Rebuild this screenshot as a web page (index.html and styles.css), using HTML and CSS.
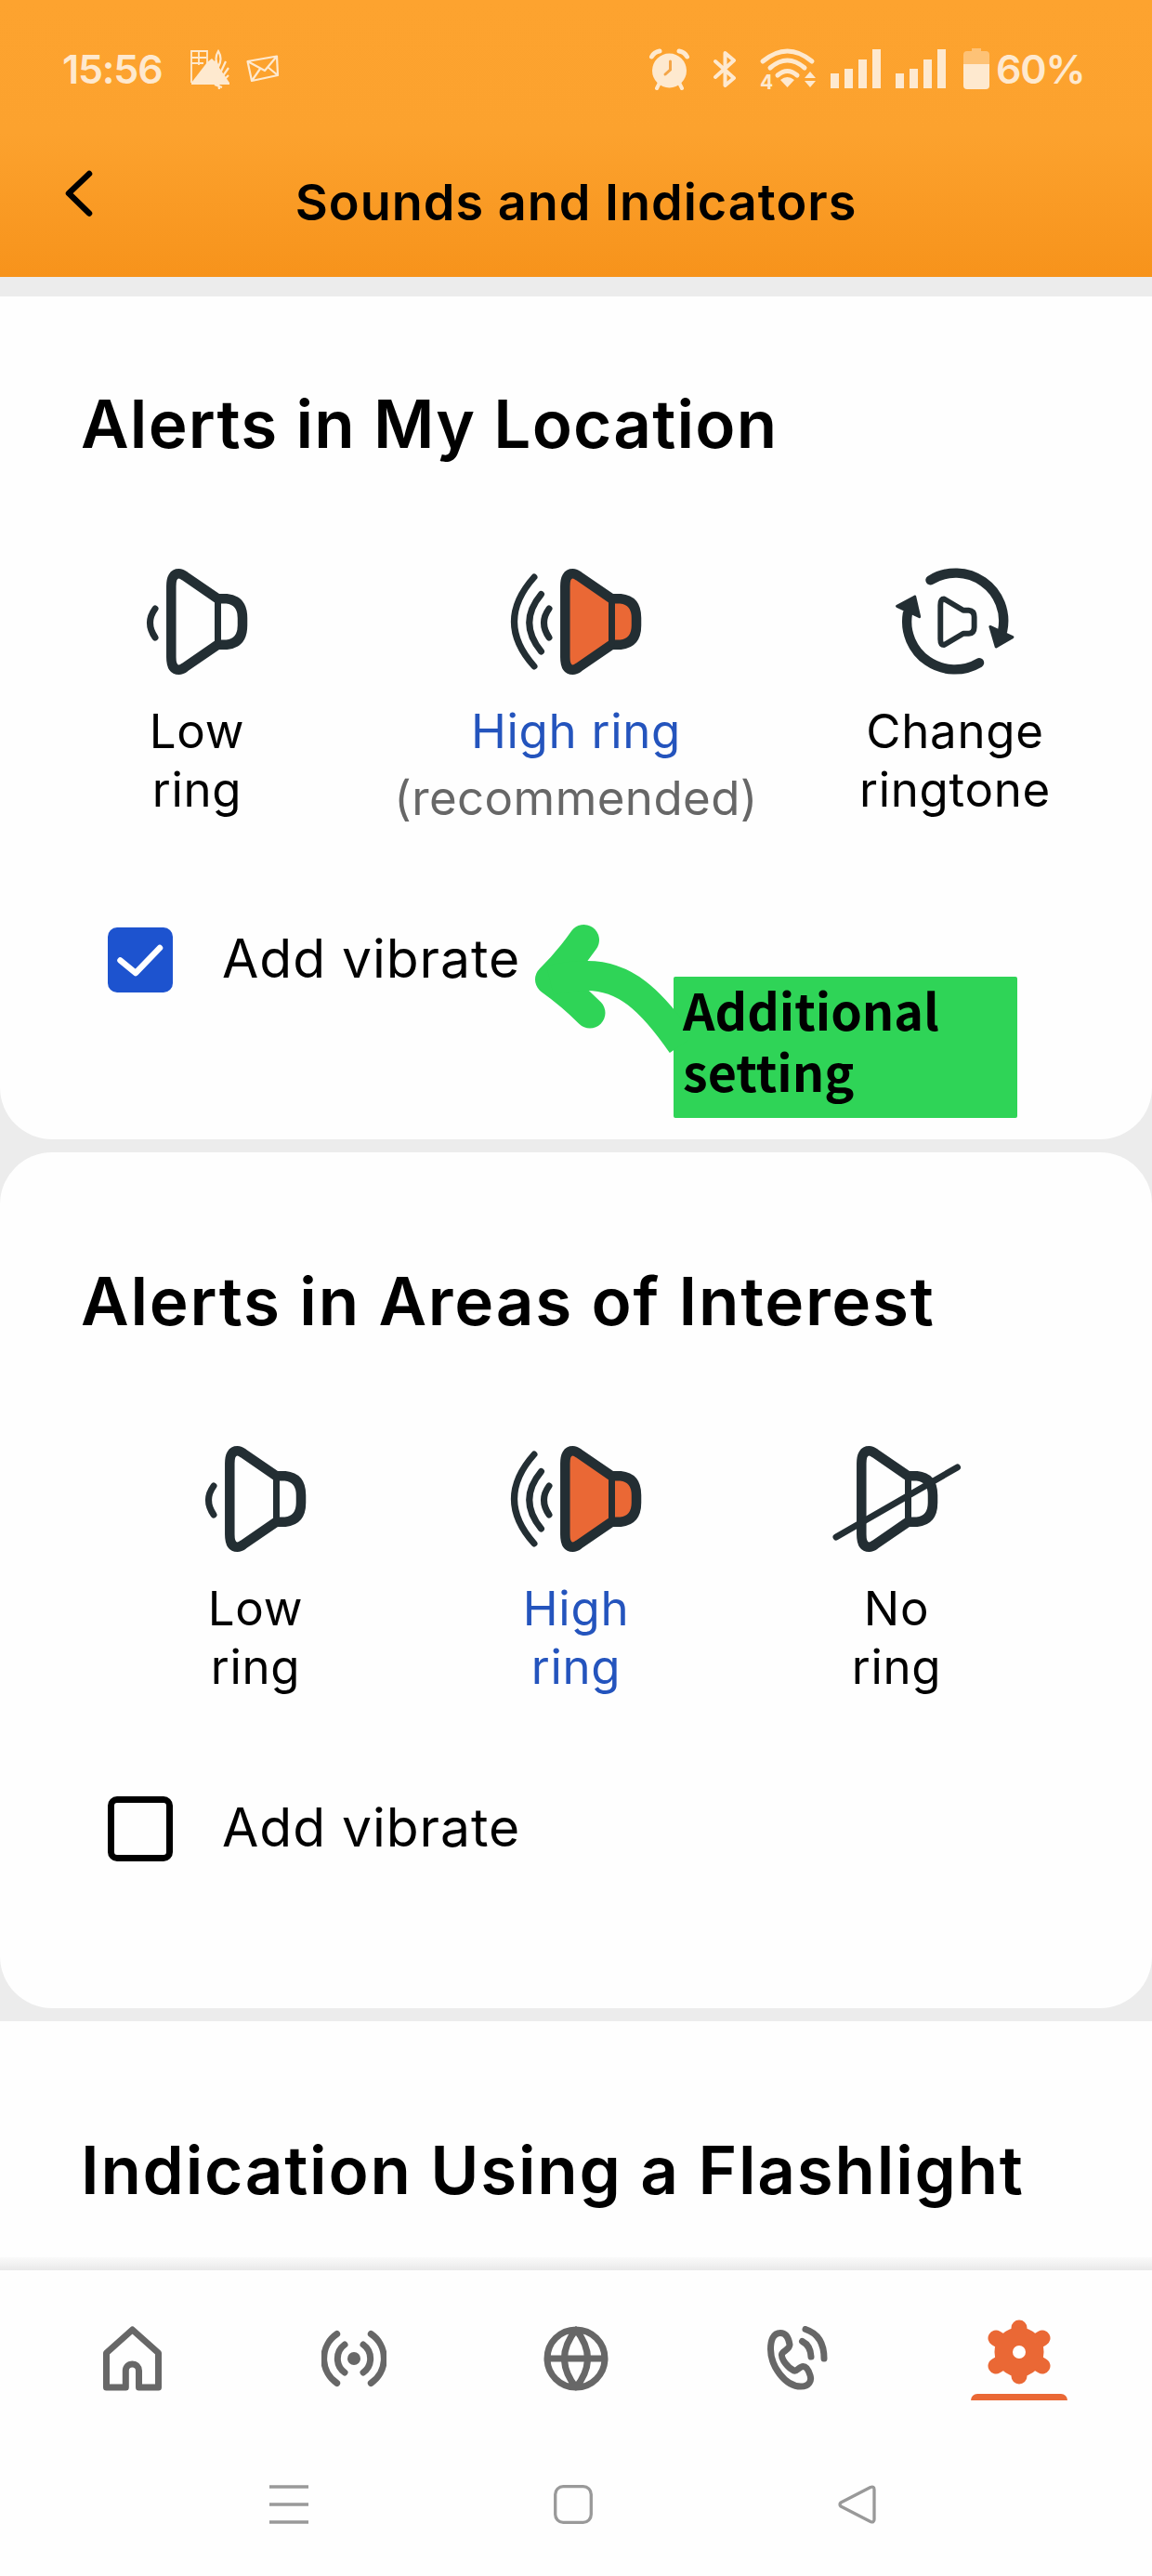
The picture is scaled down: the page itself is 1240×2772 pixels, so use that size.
FILE: index.html
```html
<!DOCTYPE html>
<html lang="en">
<head>
<meta charset="utf-8">
<title>Sounds and Indicators</title>
<link rel="stylesheet" href="styles.css">
</head>
<body>
<svg class="sprite" aria-hidden="true">
  <symbol id="cone" viewBox="0 0 88 114" overflow="visible">
    <path class="cone-body" d="M5.3 19Q5.3 5.3 13.5 5.3Q16.5 5.3 20 8L55.5 32.3H65Q82 34 82 53V61Q82 80 65 81.7H55.5L20 106Q16.5 108.700 13.500 108.700Q5.300 108.700 5.300 95Z"/>
    <path class="thin" d="M55.500 34V80"/>
  </symbol>
</svg>
<div class="screen">
  <header class="header">
    <div class="status">
      <span class="time">15:56</span>
      <svg class="s-photo" width="42" height="43" viewBox="0 0 42 43"><path fill="none" stroke="currentColor" stroke-width="1.800" d="M1 36V2H18V16M1 9H17M1 15H14M9 2V17"/><path fill="currentColor" d="M1 36L18 14L23 10L27 14L42 36V38H1Z"/><path fill="none" stroke="currentColor" stroke-width="2.200" d="M30 2Q25 10 30 19Q35 10 30 2ZM27 12L31 43M38 13L31 28M41 20L32 33M41 28L32 37M26 38L34 41"/></svg>
      <svg class="s-mail" width="36" height="30" viewBox="0 0 36 30"><path fill="none" stroke="currentColor" stroke-width="2.200" stroke-linejoin="round" d="M1.500 7L33 1.500L34 22L6 28ZM1.500 7L20 17L33 1.500M6 28L15 15M34 22L23 13"/></svg>
      <span class="spacer"></span>
      <svg class="s-alarm" width="45" height="45" viewBox="0 0 45 45"><circle cx="22.500" cy="24" r="18.500" fill="currentColor"/><path fill="none" stroke="currentColor" stroke-width="5" stroke-linecap="round" d="M3.500 9Q6 4 12 3M41.500 9Q39 4 33 3"/><path fill="none" stroke="currentColor" stroke-width="4" stroke-linecap="round" d="M12 37L9 43M33 37L36 43"/><path fill="none" stroke="#f4a547" stroke-width="3" stroke-linecap="round" d="M23.500 14V23L18 28"/></svg>
      <svg class="s-bt" width="25" height="43" viewBox="0 0 25 43"><path fill="none" stroke="currentColor" stroke-width="4" stroke-linejoin="round" stroke-linecap="round" d="M2 13L22 31L12.500 39V4L22 12L2 30"/></svg>
      <svg class="s-wifi" width="62" height="45" viewBox="0 0 62 45"><path fill="none" stroke="currentColor" stroke-width="5" stroke-linecap="round" d="M3 14Q29.500 -8 56 14M11 21Q29.500 5 48 21M19 29Q29.500 20 40 29"/><path fill="currentColor" d="M22 34Q29.500 28 37 34L29.500 42ZM48 32L54 25L60 32ZM48 35H60L54 42Z"/><text x="0" y="44" class="wifi-gen">4</text></svg>
      <svg class="s-sig" width="54" height="43" viewBox="0 0 54 43"><path fill="currentColor" d="M0 26h9v16h-9zM15 21h9v21h-9zM30 11h9v31h-9zM45 0h9v42h-9z"/></svg>
      <svg class="s-sig" width="54" height="43" viewBox="0 0 54 43"><path fill="currentColor" d="M0 26h9v16h-9zM15 21h9v21h-9zM30 11h9v31h-9zM45 0h9v42h-9z"/></svg>
      <svg class="s-bat" width="28" height="44" viewBox="0 0 28 44"><path fill="currentColor" opacity=".45" d="M0 17V7Q0 3 4 3H9V0H19V3H24Q28 3 28 7V17Z"/><path fill="currentColor" d="M0 17H28V40Q28 44 24 44H4Q0 44 0 40Z"/></svg>
      <span class="percent">60%</span>
    </div>
    <div class="titlebar">
      <svg class="back" width="30" height="51" viewBox="0 0 30 51"><path fill="none" stroke="#000" stroke-width="6.500" stroke-linecap="round" stroke-linejoin="round" d="M26 4L4 25L26 46.500"/></svg>
      <h1 class="app-title">Sounds and Indicators</h1>
    </div>
  </header>

  <main class="content">
    <section class="card card-first">
      <h2 class="card-title">Alerts in My Location</h2>
      <div class="options options-wide">
        <div class="option">
          <svg class="icon" width="109" height="114" viewBox="-21 0 109 114"><use href="#cone" width="88" height="114"/><path class="wave" d="M-12 43Q-23 58 -12 74"/></svg>
          <div class="label">Low<br>ring</div>
        </div>
        <div class="option active">
          <svg class="icon" width="142" height="114" viewBox="-54 0 142 114"><use href="#cone" width="88" height="114"/><path class="wave" d="M-12 43Q-23 58 -12 74M-20.500 27.500Q-46 58 -20.500 89M-28 9Q-71 57 -28 105"/></svg>
          <div class="label">High ring</div>
          <div class="label note">(recommended)</div>
        </div>
        <div class="option">
          <svg class="icon" width="130" height="116" viewBox="963 611 130 116"><path fill="none" stroke="#232e33" stroke-width="10.500" stroke-linecap="round" d="M1001 623.500A52.500 52.500 0 0 1 1080 679M1054.500 714A52.500 52.500 0 0 1 976 660"/><path fill="#232e33" stroke="#232e33" stroke-width="3" stroke-linejoin="round" d="M1066.500 674.500L1091 686L1073 696.500ZM984 641.500L964.500 652L989 663.500Z"/><path fill="none" stroke="#232e33" stroke-width="6" stroke-linejoin="round" d="M1012 651Q1012 644 1016 644L1037 656.500H1043Q1049 657 1049 664V675Q1049 681.500 1043 682H1037L1016 694.500Q1012 694.500 1012 688Z"/></svg>
          <div class="label">Change<br>ringtone</div>
        </div>
      </div>
      <label class="check"><span class="box on"><svg width="70" height="70" viewBox="0 0 70 70"><path fill="none" stroke="#fff" stroke-width="6.500" stroke-linecap="round" stroke-linejoin="round" d="M13.500 35.500L30 49L56 22"/></svg></span><span class="check-text">Add vibrate</span></label>
      <div class="callout"><svg class="arrow" width="170" height="170" viewBox="570 985 170 170"><path fill="none" stroke="#2fd457" stroke-width="33" stroke-linecap="round" stroke-linejoin="round" d="M628.500 1011.500Q612 1035 592.500 1054Q615 1070 635 1090"/><path fill="none" stroke="#2fd457" stroke-width="32" d="M592 1055Q612 1050 632 1050C672 1050 700 1075 734 1124"/></svg><p class="callout-text">Additional<br>setting</p></div>
    </section>

    <section class="card card-second">
      <h2 class="card-title title-loose">Alerts in Areas of Interest</h2>
      <div class="options">
        <div class="option">
          <svg class="icon" width="109" height="114" viewBox="-21 0 109 114"><use href="#cone" width="88" height="114"/><path class="wave" d="M-12 43Q-23 58 -12 74"/></svg>
          <div class="label">Low<br>ring</div>
        </div>
        <div class="option active">
          <svg class="icon" width="142" height="114" viewBox="-54 0 142 114"><use href="#cone" width="88" height="114"/><path class="wave" d="M-12 43Q-23 58 -12 74M-20.500 27.500Q-46 58 -20.500 89M-28 9Q-71 57 -28 105"/></svg>
          <div class="label">High<br>ring</div>
        </div>
        <div class="option">
          <svg class="icon" width="138" height="114" viewBox="-26 0 138 114"><use href="#cone" width="88" height="114"/><path class="wave" d="M-22 98L108.500 23"/></svg>
          <div class="label">No<br>ring</div>
        </div>
      </div>
      <label class="check"><span class="box"></span><span class="check-text">Add vibrate</span></label>
    </section>

    <section class="card card-third">
      <h2 class="card-title title-loose">Indication Using a Flashlight</h2>
    </section>
  </main>

  <nav class="tabs">
    <a class="tab"><svg width="63" height="70" viewBox="0 0 63 70"><path class="line" d="M31.500 4L3.500 29V66H24.300V48a7.100 7.100 0 0 1 14.200 0V66H59.500V29Z"/></svg></a>
    <a class="tab"><svg width="70" height="70" viewBox="0 0 70 70"><path class="line" d="M16.700 8.500A32 32 0 0 0 16.700 61.500M53.300 8.500A32 32 0 0 1 53.300 61.500M25 20A18.500 18.500 0 0 0 25 50M45 20A18.500 18.500 0 0 1 45 50"/><circle cx="35" cy="35" r="7" fill="#676767"/></svg></a>
    <a class="tab"><svg width="70" height="70" viewBox="0 0 70 70"><path class="line" d="M4 35A31 31 0 0 0 66 35A31 31 0 0 0 4 35ZH66M35 4Q10 35 35 66Q60 35 35 4"/></svg></a>
    <a class="tab"><svg width="66" height="70" viewBox="0 0 66 70"><path class="line" d="M14 7.500C6 7.500 3.500 16 3.500 25C3.500 43 19 65 36 65C45 65 48 59 46 53Q43 43.500 38.500 43.500C34 43.500 32 49.500 28.500 48C22 45 15 36 15.500 30.500C16 27 24 25.500 24 20Q22 7.500 14 7.500ZM37.500 16.500Q46.500 21 47 33M41 3.500Q61 10 61 35"/></svg></a>
    <a class="tab selected"><svg width="70" height="70" viewBox="0 0 70 70"><g fill="none" stroke="#ea6835" stroke-width="17" stroke-linecap="round"><path d="M35 9V61M10 20L60 50M60 20L10 50"/></g><circle cx="35" cy="35" r="17" fill="none" stroke="#ea6835" stroke-width="19"/><circle cx="35" cy="35" r="7" fill="#fff"/></svg><i class="underline"></i></a>
  </nav>
  <div class="sysnav">
    <span><svg width="42" height="42" viewBox="0 0 42 42"><path class="sys" d="M0 2H42M0 21H42M0 40H42"/></svg></span>
    <span><svg width="42" height="42" viewBox="0 0 42 42"><rect class="sys" x="1.700" y="1.700" width="38.600" height="38.600" rx="8.500"/></svg></span>
    <span><svg width="42" height="42" viewBox="0 0 42 42"><path class="sys" stroke-linejoin="round" d="M35 2.500Q39 1 39 5V37Q39 41 35 39.500L3 23Q1 21 3 19Z"/></svg></span>
  </div>
</div>
</body>
</html>
```

FILE: styles.css
```css
* { box-sizing: border-box; margin: 0; padding: 0; }
body { font-family: Inter, "Liberation Sans", sans-serif; color: #000; background: #fff; }
svg { display: block; flex: none; }
.sprite { position: absolute; width: 0; height: 0; }
.screen { width: 1240px; height: 2772px; display: flex; flex-direction: column; overflow: hidden; background: #fefefe; }

.header { height: 298px; flex: none; background: linear-gradient(#fda32f 0, #fca22e 48%, #f7931b 100%); }
.status { height: 148px; padding: 0 72px 0 67px; display: flex; align-items: center; color: #fee9cf; }
.spacer { flex: 1; }
.time, .percent { font-size: 43px; font-weight: 600; line-height: 148px; letter-spacing: -1.2px; white-space: nowrap; }
.time { width: 108px; }
.percent { width: 96px; }
.wifi-gen { font: 700 21px Inter, sans-serif; fill: currentColor; }
.s-photo { margin-left: 30px; }
.s-mail { margin-left: 18px; }
.s-bt { margin-left: 25px; }
.s-wifi { margin: 0 -2px 0 25px; overflow: visible; }
.s-sig { margin-left: 16px; }
.s-bat { margin: 0 7px 0 19px; }
.titlebar { height: 150px; padding: 0 70px; display: flex; align-items: center; }
.back { margin-top: -29px; }
.app-title { flex: 1; margin: -11px 30px 0 0; font-size: 54px; line-height: 80px; font-weight: 600; letter-spacing: 1px; text-align: center; white-space: nowrap; }

.content { flex: none; height: 2145px; padding-top: 21px; overflow: hidden; display: flex; flex-direction: column; gap: 14px; background: #ececec; }
.card { background: #fefefe; flex: none; padding-top: 120px; position: relative; }
.card-first { height: 907px; padding-top: 97px; border-radius: 0 0 56px 56px; }
.card-second { height: 921px; border-radius: 56px; }
.card-third { height: 268px; }
.card-third::after { content: ""; display: block; margin-top: 54px; height: 14px; background: linear-gradient(#fafafa, #e9e9e9); }
.card-title { padding-left: 87px; font-size: 71px; line-height: 80px; font-weight: 600; letter-spacing: 1.2px; white-space: nowrap; }
.title-loose { letter-spacing: 1.75px; }

.options { display: grid; grid-template-columns: repeat(3, 345px); justify-content: center; margin-top: 116px; height: 334px; margin-bottom: 43px; }
.options-wide { grid-template-columns: repeat(3, 408px); height: 343px; }
.option { display: flex; flex-direction: column; align-items: center; text-align: center; }
.icon { height: 114px; margin-bottom: 29px; overflow: visible; }
.cone-body { fill: var(--cone, none); stroke: #232e33; stroke-width: 10.5; stroke-linejoin: round; }
.active .icon { --cone: #ea6835; }
.thin, .wave { fill: none; stroke: #232e33; stroke-width: 7; stroke-linecap: round; }
.label { font-size: 51px; line-height: 63px; letter-spacing: .7px; white-space: nowrap; }
.active .label { color: #2454bd; }
.active .note { margin-top: 9px; color: #676767; letter-spacing: .4px; }

.check { display: flex; align-items: center; gap: 53px; padding-left: 116px; height: 70px; }
.box { width: 70px; height: 70px; flex: none; border: 7px solid #000; border-radius: 10px; }
.box.on { border: 0; background: #1d53cf; }
.check-text { font-size: 57px; line-height: 68px; margin-top: -2px; letter-spacing: .95px; white-space: nowrap; }

.callout { position: absolute; left: 725px; top: 732px; width: 370px; height: 152px; border-radius: 2px; background: #2fd457; }
.arrow { position: absolute; left: -155px; top: -66px; }
.callout-text { position: relative; padding: 2px 0 0 10px; font: bold 53.8px/66px "Noto Sans CJK SC", sans-serif; white-space: nowrap; }

.tabs { height: 190px; flex: none; padding: 0 23.5px; display: grid; grid-template-columns: repeat(5, 1fr); }
.tab { display: flex; flex-direction: column; align-items: center; padding-top: 60px; }
.line { fill: none; stroke: #676767; stroke-width: 7; stroke-linecap: round; stroke-linejoin: round; }
.selected { padding-top: 53px; }
.underline { width: 104px; height: 7px; margin-top: 10px; border-radius: 7px 7px 0 0; background: #ea6835; }
.sysnav { padding: 41px 164px 0 158px; display: grid; grid-template-columns: repeat(3, 1fr); justify-items: center; }
.sys { fill: none; stroke: #999; stroke-width: 3.3; }
```
